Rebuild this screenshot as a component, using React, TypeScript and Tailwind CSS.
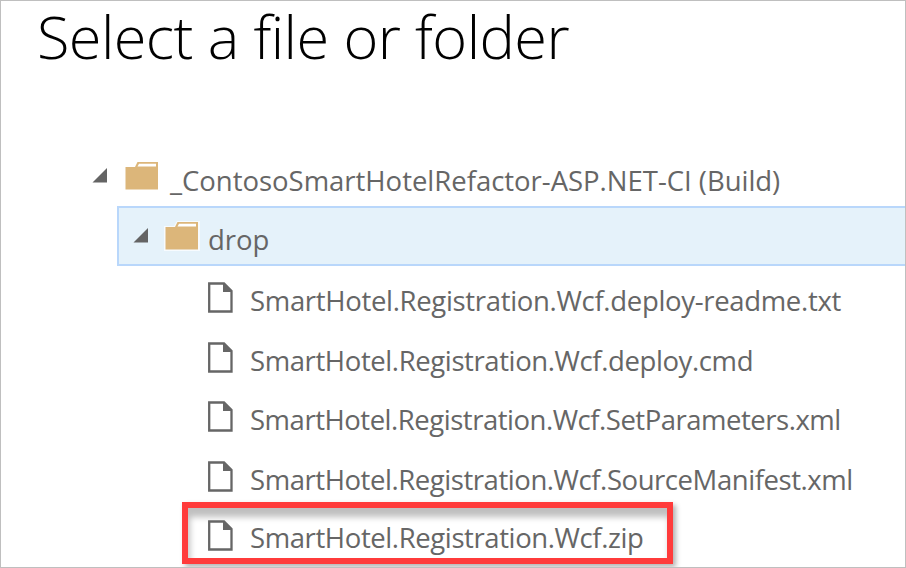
const files = [
  { name: 'SmartHotel.Registration.Wcf.deploy-readme.txt', row: 'h-[60px]', text: 'tracking-[-0.32px]' },
  { name: 'SmartHotel.Registration.Wcf.deploy.cmd', row: 'h-[59px]', text: 'tracking-[-0.4px]' },
  { name: 'SmartHotel.Registration.Wcf.SetParameters.xml', row: 'h-[60px]', text: 'tracking-[-0.48px]' },
  { name: 'SmartHotel.Registration.Wcf.SourceManifest.xml', row: 'h-[57px]', text: 'tracking-[-0.44px]' },
];

function Arrow() {
  return (
    <svg className="h-4 w-4 shrink-0" viewBox="0 0 16 16">
      <path d="M15 1V15.5H0.5Z" fill="#646464" />
    </svg>
  );
}

function Folder() {
  return (
    <svg className="h-[30px] w-[36px] shrink-0" viewBox="0 0 36 30">
      <path d="M0 5H10L13 0H36V30H0Z" fill="#fff" fillOpacity=".7" />
      <path d="M1.5 6H11L13.5 1H34V28.5H1.5Z" fill="#dcb67a" />
      <path d="M15 2.8H32V5.5H13.5Z" fill="#fff" />
    </svg>
  );
}

function FileIcon() {
  return (
    <svg className="h-[32px] w-[27px] shrink-0" viewBox="0 0 27 32">
      <path d="M3.2 2.5H18L25.5 10V30.5H3.2Z" fill="none" stroke="#666" strokeWidth="2.3" />
      <path d="M17 2V11H26Z" fill="#666" />
    </svg>
  );
}

export default function App() {
  return (
    <div className="h-[568px] w-[906px] overflow-hidden border border-[#bfbfbf] bg-white font-['Open_Sans','Noto_Sans',sans-serif] text-[27.5px] leading-[40px] text-[#666] whitespace-nowrap">
      <h1 className="h-[146px] pl-[36px] text-[59.5px] leading-[70px] font-light tracking-[-0.6px] text-black">
        Select a file or folder
      </h1>
      <div className="flex h-[59px] items-start pt-[14px] pl-[91px]">
        <div className="pt-[6px]"><Arrow /></div>
        <div className="ml-[16px]"><Folder /></div>
        <span className="ml-[10px] tracking-[-0.02px]">_ContosoSmartHotelRefactor-ASP.NET-CI (Build)</span>
      </div>
      <div className="ml-[116px] flex h-[60px] items-start border-2 border-r-0 border-[#b9d7fb] bg-[#e5f2fa] pt-[12px] pl-[14px]">
        <div className="pt-[7px]"><Arrow /></div>
        <div className="ml-[15px] pt-px"><Folder /></div>
        <span className="ml-[8px]">drop</span>
      </div>
      {files.map((f) => (
        <div key={f.name} className={`flex items-start pt-[15px] pl-[205px] ${f.row}`}>
          <FileIcon />
          <span className={`ml-[17px] ${f.text}`}>{f.name}</span>
        </div>
      ))}
      <div className="ml-[181px] flex h-[62px] w-[491px] items-start border-[6px] border-[#ff3b3b] bg-white pt-[10px] pl-[18px] shadow-[3px_3px_5px_rgba(0,0,0,0.3),inset_2px_9px_6px_rgba(0,0,0,0.25)]">
        <div className="pt-px"><FileIcon /></div>
        <span className="ml-[17px] tracking-[-0.4px]">SmartHotel.Registration.Wcf.zip</span>
      </div>
    </div>
  );
}
